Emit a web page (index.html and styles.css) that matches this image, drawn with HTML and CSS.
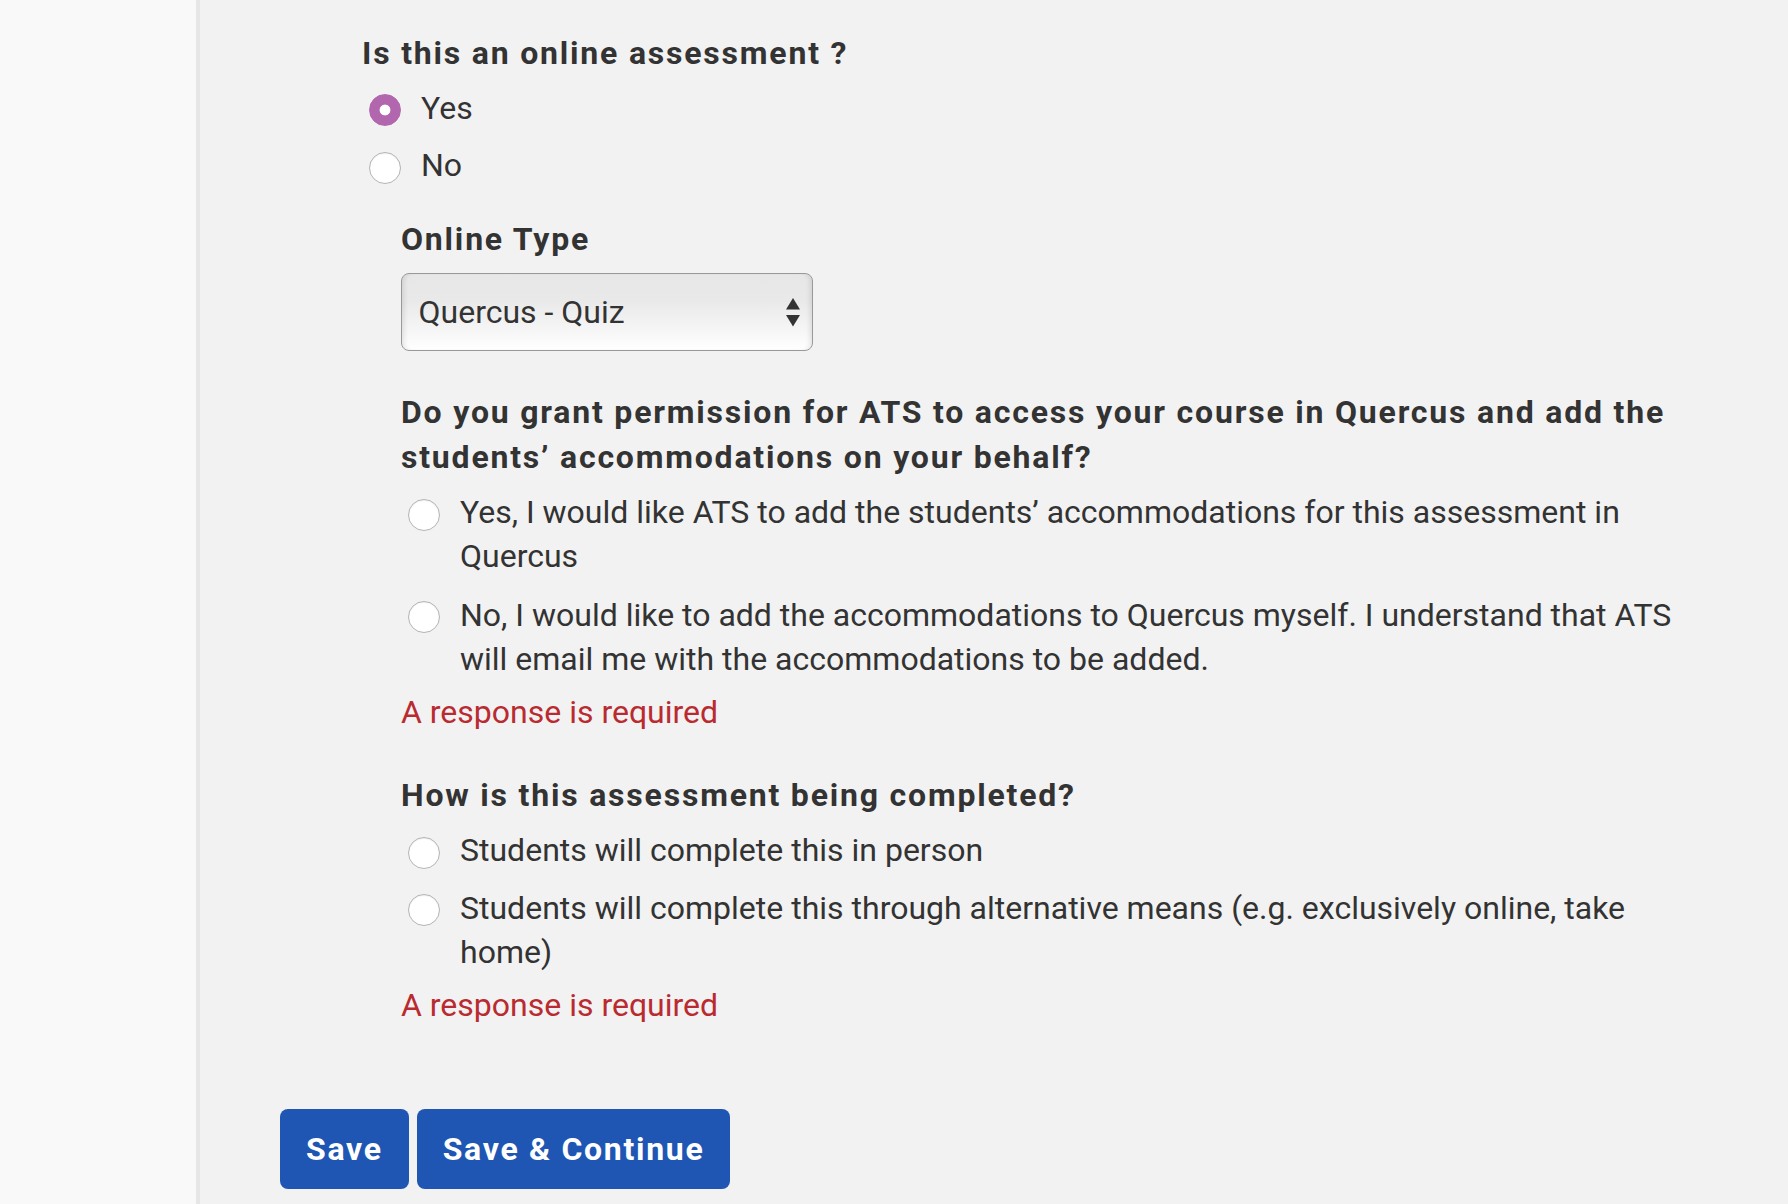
FILE: index.html
```html
<!DOCTYPE html>
<html lang="en">
<head>
<meta charset="utf-8">
<title>Online assessment</title>
<link rel="stylesheet" href="styles.css">
</head>
<body>
<div class="layout">
  <aside class="sidebar"></aside>
  <main class="main">
    <form class="form">
      <div class="block">
        <div class="q-title">Is this an online assessment ?</div>
        <div class="options">
          <label class="option"><input class="radio" type="radio" name="online" checked><span>Yes</span></label>
          <label class="option"><input class="radio" type="radio" name="online"><span>No</span></label>
        </div>

        <div class="sub">
          <div class="q-title label">Online Type</div>
          <div class="select-wrap">
            <select class="select">
              <option>Quercus - Quiz</option>
            </select>
            <svg class="arrows" width="14" height="29" viewBox="0 0 14 29" aria-hidden="true">
              <polygon points="0,11.5 7,0 14,11.5" fill="#333"/>
              <polygon points="0,17 14,17 7,28.5" fill="#333"/>
            </svg>
          </div>

          <div class="q-title q2">Do you grant permission for ATS to access your course in Quercus and add the students’ accommodations on your behalf?</div>
          <div class="options wide">
            <label class="option"><input class="radio" type="radio" name="perm"><span>Yes, I would like ATS to add the students’ accommodations for this assessment in Quercus</span></label>
            <label class="option"><input class="radio" type="radio" name="perm"><span>No, I would like to add the accommodations to Quercus myself. I understand that ATS will email me with the accommodations to be added.</span></label>
          </div>
          <div class="error">A response is required</div>

          <div class="q-title q3">How is this assessment being completed?</div>
          <div class="options">
            <label class="option"><input class="radio" type="radio" name="how"><span>Students will complete this in person</span></label>
            <label class="option"><input class="radio" type="radio" name="how"><span>Students will complete this through alternative means (e.g. exclusively online, take home)</span></label>
          </div>
          <div class="error">A response is required</div>
        </div>
      </div>

      <div class="actions">
        <button type="button" class="btn">Save</button>
        <button type="button" class="btn">Save &amp; Continue</button>
      </div>
    </form>
  </main>
</div>
</body>
</html>
```

FILE: styles.css
```css
* { box-sizing: border-box; }

html, body {
  margin: 0;
  padding: 0;
}

body {
  background: #f2f2f2;
  font-family: Roboto, "Liberation Sans", Arial, sans-serif;
  font-size: 32px;
  color: #333;
}

.layout {
  display: flex;
  min-height: 1204px;
}

.sidebar {
  width: 200px;
  flex: none;
  background: #f9f9f9;
  border-right: 4px solid #e6e6e6;
}

.main {
  flex: 1;
  padding: 31px 88px 16px 80px;
}

.block {
  margin-left: 82px;
}

.q-title {
  font-weight: 700;
  letter-spacing: 1.8px;
  line-height: 44.8px;
  margin: 0 0 10px;
}

.options {
  display: flex;
  flex-direction: column;
  gap: 13.5px;
  padding-left: 6.5px;
}

.options.wide {
  gap: 14.7px;
}

.option {
  display: flex;
  align-items: flex-start;
  gap: 20.5px;
  line-height: 44px;
  cursor: pointer;
}

.radio {
  appearance: none;
  -webkit-appearance: none;
  flex: none;
  width: 32px;
  height: 32px;
  margin: 8.7px 0 0;
  border-radius: 50%;
  border: 1px solid #b4b4b4;
  background: #fff;
  box-shadow: inset 0 1px 1px rgba(0, 0, 0, 0.06);
}

.radio:checked {
  border-color: #b266ae;
  background: radial-gradient(circle, #fff 0 5px, #b266ae 5.8px);
  box-shadow: none;
}

.sub {
  margin-left: 39px;
  margin-top: 30px;
}

.label {
  margin-bottom: 11.2px;
}

.select-wrap {
  position: relative;
  width: 412px;
  height: 78px;
}

.select {
  appearance: none;
  -webkit-appearance: none;
  width: 100%;
  height: 100%;
  margin: 0;
  padding: 0 40px 0 16.5px;
  font: 400 32px Roboto, "Liberation Sans", Arial, sans-serif;
  color: #333;
  border: 1.5px solid #999;
  border-radius: 8px;
  background: linear-gradient(#e7e7e7 0%, #e9e9e9 35%, #f6f6f6 75%, #ffffff 100%);
  box-shadow: inset 5px 0 5px -3px rgba(0, 0, 0, 0.10), inset -5px 0 5px -3px rgba(0, 0, 0, 0.10);
}

.arrows {
  position: absolute;
  right: 13.5px;
  top: 25px;
  pointer-events: none;
}

.q2 {
  margin-top: 39.2px;
}

.q3 {
  margin-top: 39.6px;
}

.error {
  color: #b92b30;
  line-height: 44px;
  margin-top: 9px;
}

.actions {
  display: flex;
  gap: 8px;
  margin-top: 82px;
}

.btn {
  height: 80px;
  padding: 0 26px;
  border: 0;
  border-radius: 8px;
  background: #1f56b3;
  color: #fff;
  font: 700 32px Roboto, "Liberation Sans", Arial, sans-serif;
  letter-spacing: 1.7px;
  cursor: pointer;
}
```
